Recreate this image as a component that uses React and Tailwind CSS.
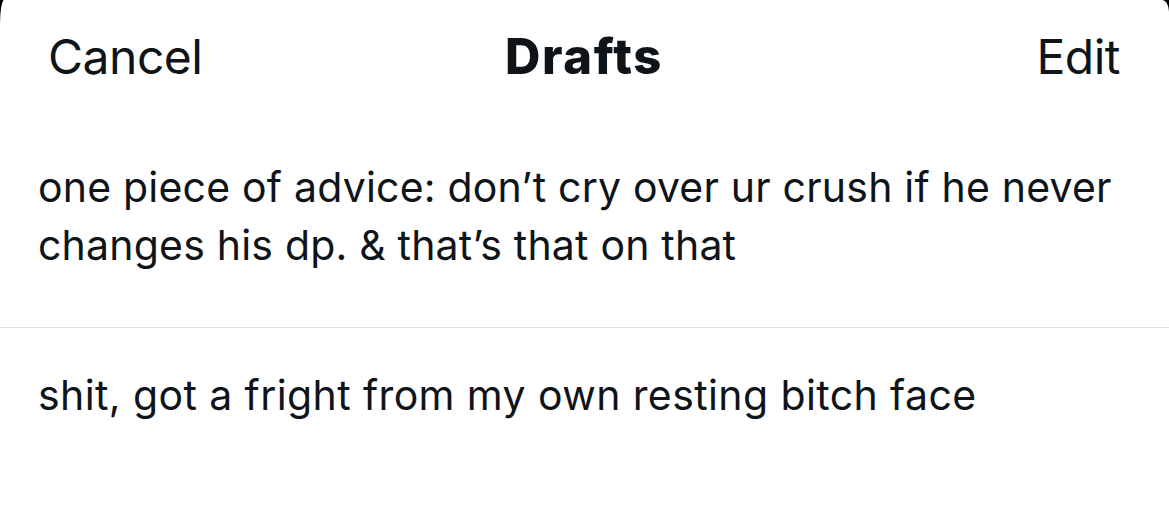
export default function App() {
  const drafts = [
    ["one piece of advice: don’t cry over ur crush if he never", "changes his dp. & that’s that on that"],
    ["shit, got a fright from my own resting bitch face"],
  ];

  return (
    <div className="h-[522px] w-full overflow-hidden bg-black" style={{ fontFamily: "Inter, 'Noto Sans', sans-serif" }}>
      <div className="h-full w-full rounded-tl-[4px_26px] rounded-tr-[7px_12px] bg-white text-[#0f1419]">
        <div className="grid grid-cols-[1fr_auto_1fr] items-center pl-[48px] pr-[49px] pt-[27px]">
          <span className="text-[48px] leading-[60px] tracking-[-0.5px]">Cancel</span>
          <span className="text-[49px] font-extrabold leading-[60px] tracking-[1.6px]">Drafts</span>
          <span className="text-right text-[48px] leading-[60px] tracking-[-0.5px]">Edit</span>
        </div>

        <div className="border-b border-[#dedede] pb-[53px] pl-[38px] pt-[71px]">
          <p className="text-[41px] leading-[58px] tracking-[0.2px]">
            {drafts[0][0]}
            <br />
            {drafts[0][1]}
          </p>
        </div>
        <div className="pl-[38px] pt-[38px]">
          <p className="text-[41px] leading-[58px] tracking-[0.4px]">{drafts[1][0]}</p>
        </div>
      </div>
    </div>
  );
}
